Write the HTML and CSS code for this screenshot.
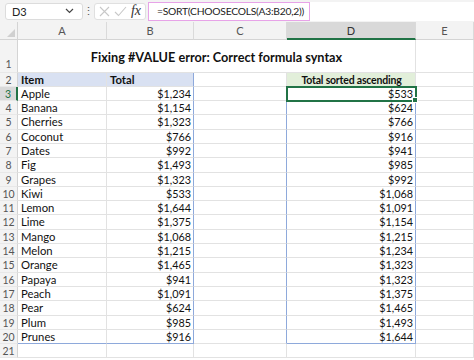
FILE: index.html
```html
<!DOCTYPE html>
<html lang="en">
<head>
    <meta charset="UTF-8">
    <meta name="viewport" content="width=device-width, initial-scale=1.0">
    <title>Fixing #VALUE error</title>
    <link rel="stylesheet" href="styles.css">
</head>
<body>
    <div class="formula-bar">
        <div class="name-box">
            <span>D3</span>
            <svg class="chevron" width="9" height="6" viewBox="0 0 9 6"><path d="M1 1 L4.5 4.5 L8 1" fill="none" stroke="#444" stroke-width="1.2"/></svg>
        </div>
        <div class="grip">⋮</div>
        <div class="fx-box">
            <svg width="11" height="11" viewBox="0 0 11 11"><path d="M1 1 L10 10 M10 1 L1 10" stroke="#c8c8c8" stroke-width="1.1"/></svg>
            <svg width="13" height="11" viewBox="0 0 13 11"><path d="M1 6 L4.5 9.5 L12 1" fill="none" stroke="#c8c8c8" stroke-width="1.1"/></svg>
            <span class="fx">fx</span>
        </div>
        <div class="formula-input">
            <span class="formula">=SORT(CHOOSECOLS(A3:B20,2))</span>
        </div>
    </div>

    <div class="sheet">
        <!-- column headers -->
        <div class="corner"></div>
        <div class="col-head">A</div>
        <div class="col-head">B</div>
        <div class="col-head">C</div>
        <div class="col-head active">D</div>
        <div class="col-head">E</div>

        <div class="row-head tall">1</div>
        <div class="title">Fixing #VALUE error: Correct formula syntax</div>
        <div class="cell"></div>

        <div class="row-head">2</div>
        <div class="cell head-blue">Item</div>
        <div class="cell head-blue edge-r">Total</div>
        <div class="cell"></div>
        <div class="cell head-green">Total sorted ascending</div>
        <div class="cell"></div>

        <div class="row-head active">3</div>
        <div class="cell">Apple</div><div class="cell num edge-r">$1,234</div><div class="cell edge-r"></div><div class="cell num edge-r selected">$533</div><div class="cell"></div>
        <div class="row-head">4</div>
        <div class="cell">Banana</div><div class="cell num edge-r">$1,154</div><div class="cell edge-r"></div><div class="cell num edge-r">$624</div><div class="cell"></div>
        <div class="row-head">5</div>
        <div class="cell">Cherries</div><div class="cell num edge-r">$1,323</div><div class="cell edge-r"></div><div class="cell num edge-r">$766</div><div class="cell"></div>
        <div class="row-head">6</div>
        <div class="cell">Coconut</div><div class="cell num edge-r">$766</div><div class="cell edge-r"></div><div class="cell num edge-r">$916</div><div class="cell"></div>
        <div class="row-head">7</div>
        <div class="cell">Dates</div><div class="cell num edge-r">$992</div><div class="cell edge-r"></div><div class="cell num edge-r">$941</div><div class="cell"></div>
        <div class="row-head">8</div>
        <div class="cell">Fig</div><div class="cell num edge-r">$1,493</div><div class="cell edge-r"></div><div class="cell num edge-r">$985</div><div class="cell"></div>
        <div class="row-head">9</div>
        <div class="cell">Grapes</div><div class="cell num edge-r">$1,323</div><div class="cell edge-r"></div><div class="cell num edge-r">$992</div><div class="cell"></div>
        <div class="row-head">10</div>
        <div class="cell">Kiwi</div><div class="cell num edge-r">$533</div><div class="cell edge-r"></div><div class="cell num edge-r">$1,068</div><div class="cell"></div>
        <div class="row-head">11</div>
        <div class="cell">Lemon</div><div class="cell num edge-r">$1,644</div><div class="cell edge-r"></div><div class="cell num edge-r">$1,091</div><div class="cell"></div>
        <div class="row-head">12</div>
        <div class="cell">Lime</div><div class="cell num edge-r">$1,375</div><div class="cell edge-r"></div><div class="cell num edge-r">$1,154</div><div class="cell"></div>
        <div class="row-head">13</div>
        <div class="cell">Mango</div><div class="cell num edge-r">$1,068</div><div class="cell edge-r"></div><div class="cell num edge-r">$1,215</div><div class="cell"></div>
        <div class="row-head">14</div>
        <div class="cell">Melon</div><div class="cell num edge-r">$1,215</div><div class="cell edge-r"></div><div class="cell num edge-r">$1,234</div><div class="cell"></div>
        <div class="row-head">15</div>
        <div class="cell">Orange</div><div class="cell num edge-r">$1,465</div><div class="cell edge-r"></div><div class="cell num edge-r">$1,323</div><div class="cell"></div>
        <div class="row-head">16</div>
        <div class="cell">Papaya</div><div class="cell num edge-r">$941</div><div class="cell edge-r"></div><div class="cell num edge-r">$1,323</div><div class="cell"></div>
        <div class="row-head">17</div>
        <div class="cell">Peach</div><div class="cell num edge-r">$1,091</div><div class="cell edge-r"></div><div class="cell num edge-r">$1,375</div><div class="cell"></div>
        <div class="row-head">18</div>
        <div class="cell">Pear</div><div class="cell num edge-r">$624</div><div class="cell edge-r"></div><div class="cell num edge-r">$1,465</div><div class="cell"></div>
        <div class="row-head">19</div>
        <div class="cell">Plum</div><div class="cell num edge-r">$985</div><div class="cell edge-r"></div><div class="cell num edge-r">$1,493</div><div class="cell"></div>
        <div class="row-head">20</div>
        <div class="cell edge-b">Prunes</div><div class="cell num edge-r edge-b">$916</div><div class="cell edge-r"></div><div class="cell num edge-r edge-b">$1,644</div><div class="cell"></div>
        <div class="row-head">21</div>
        <div class="cell"></div><div class="cell"></div><div class="cell"></div><div class="cell"></div><div class="cell"></div>
    </div>
</body>
</html>
```

FILE: styles.css
```css
body { margin: 0; background: #fff; font-family: Lato, "Liberation Sans", sans-serif; color: #222; overflow: hidden; }

/* formula bar */
.formula-bar { height: 22px; background: #f3f3f3; display: flex; align-items: center; padding-left: 5px; box-sizing: border-box; }
.name-box { width: 78px; height: 17px; background: #fff; border: 1px solid #dcdcdc; border-radius: 3px; box-sizing: border-box; display: flex; align-items: center; justify-content: space-between; padding: 0 8px 0 6px; font-size: 11px; }
.grip { width: 11px; text-align: center; font-size: 11px; color: #555; }
.fx-box { width: 52px; height: 17px; background: #fff; border: 1px solid #e0e0e0; border-radius: 3px; box-sizing: border-box; display: flex; align-items: center; justify-content: space-around; padding: 0 2px; }
.fx { font-family: "Liberation Serif", serif; font-style: italic; font-size: 14px; color: #333; }
.formula-input { flex: 1; height: 19px; margin-left: 2px; background: #fff; display: flex; align-items: center; }
.formula { height: 19px; box-sizing: border-box; border: 1.5px solid #e7a3e8; padding: 0 5px 0 8px; display: flex; align-items: center; font-size: 10.3px; letter-spacing: -0.25px; color: #222; }

/* grid */
.sheet { display: grid; grid-template-columns: 18px 89px 87px 93px 129px 1fr; grid-template-rows: 18px 32.5px repeat(20, 14.3px); font-size: 11px; }
.sheet > div { box-sizing: border-box; border-right: 1px solid #e2e2e2; border-bottom: 1px solid #e2e2e2; white-space: nowrap; overflow: hidden; }

.corner { background: #f3f3f3; position: relative; border-color: #d4d4d4 !important; }
.corner::after { content: ""; position: absolute; right: 2px; bottom: 2px; border-left: 8px solid transparent; border-bottom: 8px solid #d0d0d0; }
.col-head { background: #f3f3f3; text-align: center; line-height: 17px; color: #555; border-right-color: #dadada !important; border-bottom-color: #d4d4d4 !important; }
.col-head.active { background: #d9d9d9; color: #333; border-bottom: 2px solid #217346 !important; }
.row-head { background: #f3f3f3; text-align: center; line-height: 14px; color: #555; border-right-color: #d4d4d4 !important; border-bottom-color: #e8e8e8 !important; font-size: 10.5px; }
.row-head.tall { display: flex; align-items: flex-end; justify-content: center; padding-bottom: 1px; }
.row-head.active { background: #d9d9d9; color: #217346; border-right: 2px solid #217346 !important; }

.title { grid-column: 2 / 6; text-align: center; font-weight: bold; font-size: 12.7px; padding-top: 9px; color: #111; }
.cell { line-height: 14px; padding: 0 2px 0 3px; color: #111; font-size: 11.3px; }
.num { text-align: right; font-size: 10.8px; }
.head-blue { background: #d9e1f2; font-weight: bold; }
.head-green { background: #e2efda; font-weight: bold; text-align: center; font-size: 10.5px; letter-spacing: -0.2px; }
.edge-r { border-right-color: #8ea9db !important; }
.edge-b { border-bottom-color: #8ea9db !important; }
.selected { outline: 2px solid #217346; outline-offset: -1px; position: relative; overflow: visible !important; }
.selected::after { content: ""; position: absolute; right: -3px; bottom: -3px; width: 4px; height: 4px; background: #217346; border: 1px solid #fff; }
```
